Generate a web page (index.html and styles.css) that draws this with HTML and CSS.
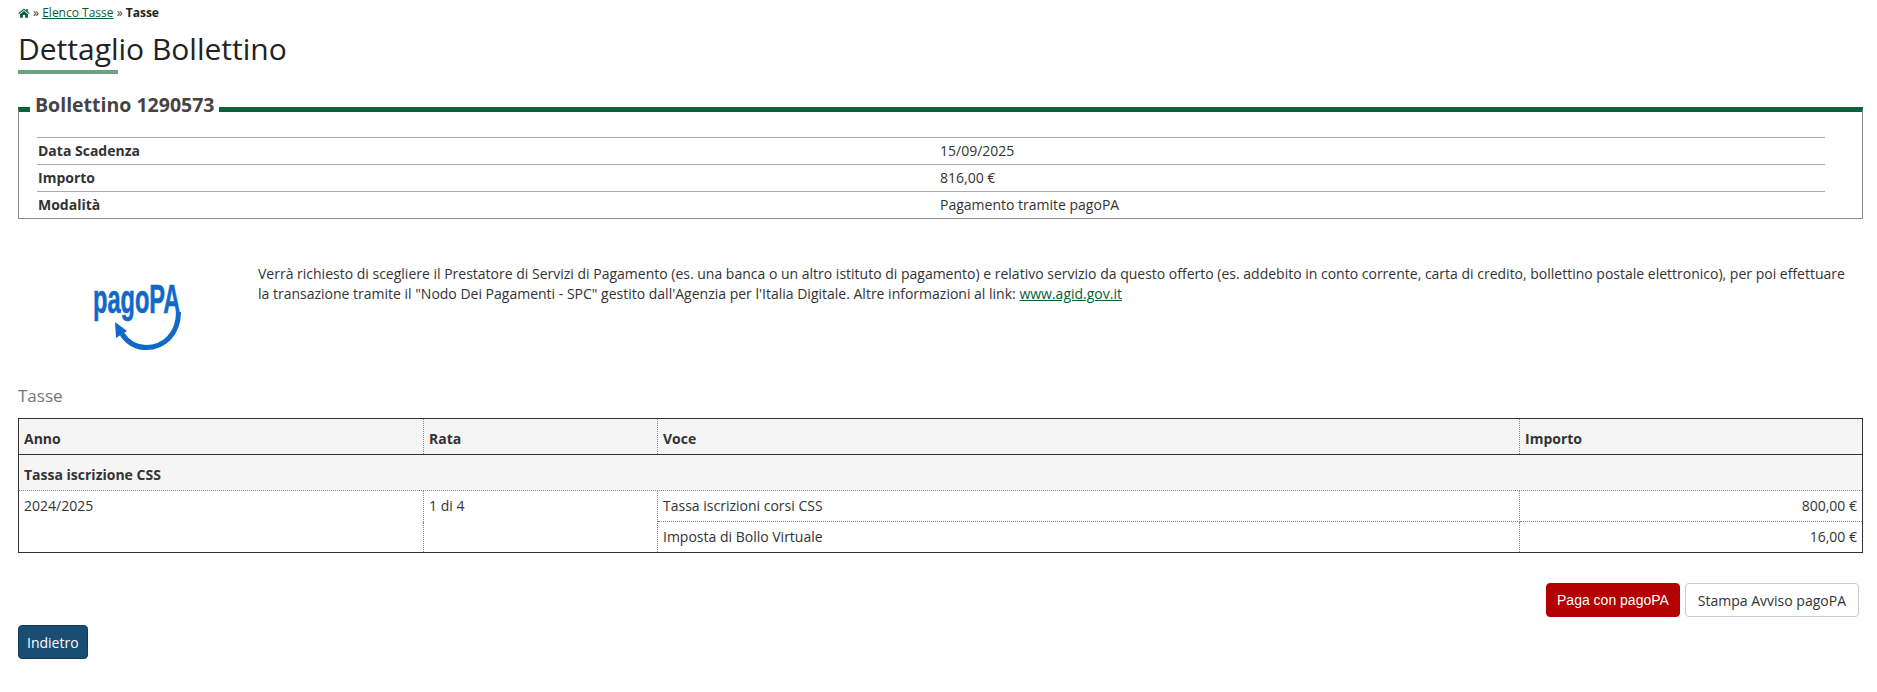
FILE: index.html
```html
<!DOCTYPE html>
<html lang="en">

<head>
    <meta charset="UTF-8">
    <meta name="viewport" content="width=device-width, initial-scale=1.0">
    <title>Dettaglio Bollettino</title>
    <link rel="stylesheet" href="styles.css">
</head>

<body>
    <div class="breadcrumb">
        <svg class="home-icon" viewBox="0 0 12 10" width="12" height="10"><path d="M6 0.6 L0.2 5.3 L1 6.1 L6 2.1 L11 6.1 L11.8 5.3 L9.8 3.7 L9.8 1 L8.3 1 L8.3 2.5 Z M6 3 L2 6.2 L2 9.7 L4.9 9.7 L4.9 7 L7.1 7 L7.1 9.7 L10 9.7 L10 6.2 Z"/></svg>
        » <a href="#">Elenco Tasse</a> » <b>Tasse</b>
    </div>

    <h1 class="page-title">Dettaglio Bollettino</h1>

    <fieldset class="box">
        <legend>Bollettino 1290573</legend>
        <div class="row"><span class="label">Data Scadenza</span><span>15/09/2025</span></div>
        <div class="row"><span class="label">Importo</span><span>816,00 €</span></div>
        <div class="row"><span class="label">Modalità</span><span>Pagamento tramite pagoPA</span></div>
    </fieldset>

    <div class="pagopa">
        <div class="logo">
            <svg viewBox="0 0 92 80" width="92" height="80">
                <text class="logo-text" transform="translate(1 41) scale(0.59 1)">pagoPA</text>
                <path d="M86.5 40 C86.5 62 72 75.5 54 75.5 C44 75.5 36 71 30 62" class="logo-arc"/>
                <path d="M23 50 L35 59 L24 66 Z" class="logo-head"/>
            </svg>
        </div>
        <p>Verrà richiesto di scegliere il Prestatore di Servizi di Pagamento (es. una banca o un altro istituto di pagamento) e relativo servizio da questo offerto (es. addebito in conto corrente, carta di credito, bollettino postale elettronico), per poi effettuare la transazione tramite il "Nodo Dei Pagamenti - SPC" gestito dall'Agenzia per l'Italia Digitale. Altre informazioni al link: <a href="#">www.agid.gov.it</a></p>
    </div>

    <div class="table-title">Tasse</div>

    <table class="tasse">
        <colgroup>
            <col class="col-anno"><col class="col-rata"><col class="col-voce"><col>
        </colgroup>
        <thead>
            <tr><th>Anno</th><th>Rata</th><th>Voce</th><th>Importo</th></tr>
        </thead>
        <tbody>
            <tr class="group"><td colspan="4">Tassa iscrizione CSS</td></tr>
            <tr>
                <td rowspan="2">2024/2025</td>
                <td rowspan="2">1 di 4</td>
                <td>Tassa iscrizioni corsi CSS</td>
                <td class="num">800,00 €</td>
            </tr>
            <tr>
                <td>Imposta di Bollo Virtuale</td>
                <td class="num">16,00 €</td>
            </tr>
        </tbody>
    </table>

    <div class="actions">
        <button class="btn btn-red">Paga con pagoPA</button>
        <button class="btn btn-white">Stampa Avviso pagoPA</button>
    </div>

    <button class="btn btn-blue">Indietro</button>
</body>

</html>
```

FILE: styles.css
```css
body {
    font-family: "Open Sans", sans-serif;
    font-size: 14px;
    line-height: 20px;
    color: #333;
    margin: 0;
    padding: 0 14px 0 18px;
}

a {
    color: #0b5c36;
    text-decoration: underline;
}

.breadcrumb {
    font-size: 12px;
    line-height: 14px;
    padding-top: 6px;
    color: #333;
}

.breadcrumb b {
    color: #222;
}

.home-icon {
    fill: #0b6238;
    vertical-align: -1px;
}

.page-title {
    display: block;
    width: max-content;
    font-size: 30px;
    font-weight: 400;
    line-height: 38px;
    color: #222;
    margin: 10px 0 0;
    padding-bottom: 1px;
}

.page-title::after {
    content: "";
    display: block;
    width: 100px;
    height: 4px;
    margin-top: 2px;
    background-color: #6ba287;
}

.box {
    border: 1px solid #8c8c8c;
    border-top: 5px solid #0b6238;
    margin: 18px 0 0;
    padding: 0 37px 0 18px;
    box-sizing: border-box;
    height: 126px;
    display: block;
    min-width: 0;
}

.box legend {
    font-size: 19.5px;
    font-weight: 700;
    line-height: 24px;
    color: #444;
    padding: 0 5px 9px;
    margin-left: -7px;
}

.row {
    display: flex;
    border-top: 1px solid #aaa;
    height: 27px;
    box-sizing: border-box;
    line-height: 25px;
    padding-left: 1px;
}

.row:first-of-type {
    margin-top: 11px;
}

.label {
    width: 902px;
    font-weight: 700;
}

.pagopa {
    display: flex;
    margin-top: 44px;
    height: 121px;
}

.logo {
    width: 240px;
    flex: none;
    padding: 9px 0 0 74px;
    box-sizing: border-box;
}

.logo-text {
    font-family: "Liberation Sans", sans-serif;
    font-weight: 700;
    font-size: 40px;
    fill: #1268c8;
    stroke: #1268c8;
    stroke-width: 0.6;
}

.logo-arc {
    fill: none;
    stroke: #1268c8;
    stroke-width: 5;
}

.logo-head {
    fill: #1268c8;
}

.pagopa p {
    margin: 0;
    padding: 1px 10px 0 0;
}

.table-title {
    font-size: 17px;
    line-height: 24px;
    color: #777;
    margin-bottom: 10px;
}

.tasse {
    width: 100%;
    border-collapse: collapse;
    border: 1px solid #333;
    table-layout: fixed;
}

.col-anno {
    width: 405px;
}

.col-rata {
    width: 234px;
}

.col-voce {
    width: 862px;
}

.tasse th,
.tasse td {
    padding: 5px;
    text-align: left;
    vertical-align: top;
    border: 1px dotted #888;
}

.tasse th {
    background-color: #f5f5f5;
    padding: 10px 5px 5px;
    border-bottom: 1px solid #333;
    border-top: 1px solid #333;
}

.tasse .group td {
    background-color: #f5f5f5;
    font-weight: 700;
    padding: 10px 5px 5px;
}

.tasse .num {
    text-align: right;
}

.actions {
    display: flex;
    justify-content: flex-end;
    gap: 5px;
    margin-top: 30px;
    padding-right: 4px;
}

.btn {
    font-family: "Open Sans", sans-serif;
    font-size: 14px;
    height: 34px;
    padding: 0 12px;
    border-radius: 4px;
    border: 1px solid #ccc;
    background-color: white;
    color: #333;
}

.btn-red {
    background-color: #b30000;
    border-color: #b30000;
    color: white;
    font-family: "Liberation Sans", sans-serif;
    padding: 0 10px;
}

.btn-blue {
    display: block;
    background-color: #1a4d73;
    border-color: #133a57;
    color: white;
    margin-top: 8px;
    padding: 0 8px;
}
```
